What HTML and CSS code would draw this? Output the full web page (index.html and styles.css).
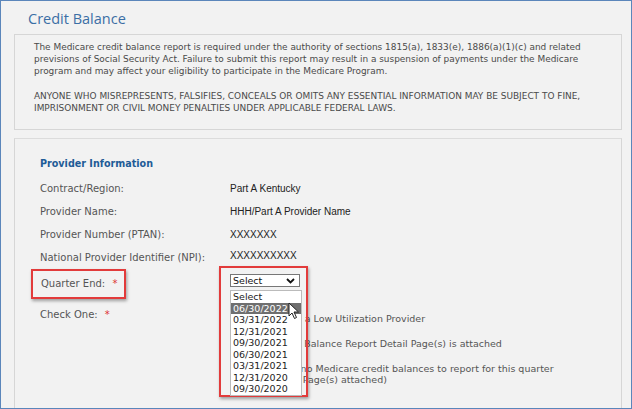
FILE: index.html
```html
<!DOCTYPE html>
<html lang="en">
<head>
    <meta charset="UTF-8">
    <title>Credit Balance</title>
    <link rel="stylesheet" href="styles.css">
</head>
<body>
    <div class="frame">
        <h1 class="title">Credit Balance</h1>
        <div class="notice">
            <p>The Medicare credit balance report is required under the authority of sections 1815(a), 1833(e), 1886(a)(1)(c) and related previsions of Social Security Act. Failure to submit this report may result in a suspension of payments under the Medicare program and may affect your eligibility to participate in the Medicare Program.</p>
            <p>ANYONE WHO MISREPRESENTS, FALSIFIES, CONCEALS OR OMITS ANY ESSENTIAL INFORMATION MAY BE SUBJECT TO FINE, IMPRISONMENT OR CIVIL MONEY PENALTIES UNDER APPLICABLE FEDERAL LAWS.</p>
        </div>
        <div class="panel">
            <h2 class="section">Provider Information</h2>
            <div class="form">
                <div class="label">Contract/Region:</div>
                <div class="value">Part A Kentucky</div>

                <div class="label">Provider Name:</div>
                <div class="value">HHH/Part A Provider Name</div>

                <div class="label">Provider Number (PTAN):</div>
                <div class="value">XXXXXXX</div>

                <div class="label">National Provider Identifier (NPI):</div>
                <div class="value npi">XXXXXXXXXX</div>

                <div class="label quarter"><span class="hl">Quarter End: <span class="req">*</span></span></div>
                <div class="value quarter-value">
                    <div class="callout">
                        <div class="select">Select
                            <svg class="chev" width="9" height="6" viewBox="0 0 9 6"><path d="M1 1 L4.5 4.5 L8 1" fill="none" stroke="#111" stroke-width="1.8"/></svg>
                        </div>
                        <ul class="options">
                            <li>Select</li>
                            <li class="active">06/30/2022</li>
                            <li>03/31/2022</li>
                            <li>12/31/2021</li>
                            <li>09/30/2021</li>
                            <li>06/30/2021</li>
                            <li>03/31/2021</li>
                            <li>12/31/2020</li>
                            <li>09/30/2020</li>
                        </ul>
                        <svg class="cursor" width="12" height="18" viewBox="0 0 12 18"><path d="M1 1 L1 14 L4 11 L6.5 16.5 L8.5 15.5 L6 10 L10.5 10 Z" fill="#fff" stroke="#222" stroke-width="1"/></svg>
                    </div>
                </div>

                <div class="label check">Check One: <span class="req">*</span></div>
                <div class="value check-list">
                    <label class="radio"><span class="dot"></span>Provider is a Low Utilization Provider</label>
                    <label class="radio"><span class="dot"></span>The Credit Balance Report Detail Page(s) is attached</label>
                    <label class="radio"><span class="dot"></span>There are no Medicare credit balances to report for this quarter<br>(No Detail Page(s) attached)</label>
                </div>
            </div>
        </div>
    </div>
</body>
</html>
```

FILE: styles.css
```css
body { margin: 0; background: #f2f2f2; }
.frame {
    width: 632px;
    height: 409px;
    box-sizing: border-box;
    border: 1px solid #5b86bb;
    background: #f2f2f2;
    overflow: hidden;
    font-family: "DejaVu Sans", Verdana, sans-serif;
}
.title {
    margin: 0;
    padding: 8px 0 0 27px;
    height: 19px;
    font-family: "Open Sans", sans-serif;
    font-size: 14.5px;
    font-weight: normal;
    line-height: 19px;
    color: #3b6ea5;
}
.notice {
    margin: 6px 9px 0 13px;
    height: 96px;
    box-sizing: border-box;
    border: 1px solid #d6d6d6;
    padding: 6px 20px 0 19px;
    font-size: 8.95px;
    line-height: 12px;
    color: #4a4a4a;
}
.notice p { margin: 0 0 13px; }
.panel {
    margin: 8px 9px 0 13px;
    height: 300px;
    border: 1px solid #d6d6d6;
    border-top-color: #dcdcdc;
    padding: 18px 0 0 25px;
}
.section {
    margin: 0 0 6px;
    font-size: 9.6px;
    line-height: 14px;
    color: #1e5c97;
}
.form {
    display: grid;
    grid-template-columns: 190px 1fr;
    grid-template-rows: repeat(4, 23px) 28px auto;
}
.label {
    font-size: 10px;
    line-height: 23px;
    color: #555;
}
.value {
    font-family: "Liberation Sans", Arial, sans-serif;
    font-size: 10px;
    line-height: 23px;
    color: #222;
}
.npi { line-height: 19px; }
.req { color: #d33; margin-left: 4px; }
.quarter { height: 28px; line-height: 28px; }
.hl {
    display: inline-block;
    margin-left: -9px;
    padding: 0 7px 0 8px;
    height: 26px;
    line-height: 26px;
    border: 2px solid #e23b3b;
    box-shadow: 1px 2px 3px rgba(0, 0, 0, 0.35);
}
.quarter-value { position: relative; height: 28px; }
.callout {
    position: absolute;
    left: -11px;
    top: -3px;
    width: 85px;
    height: 127px;
    border: 2px solid #e23b3b;
    box-shadow: 1px 2px 3px rgba(0, 0, 0, 0.35);
    z-index: 2;
}
.select {
    margin: 6px 0 0 9px;
    width: 70px;
    height: 13px;
    box-sizing: border-box;
    border: 1px solid #777;
    background: #fff;
    padding-left: 2px;
    font-family: "DejaVu Sans", Verdana, sans-serif;
    font-size: 9.5px;
    line-height: 11px;
    color: #111;
    position: relative;
}
.chev { position: absolute; right: 4px; top: 3px; }
.options {
    list-style: none;
    margin: 3px 0 0 9px;
    padding: 0;
    width: 70px;
    background: #fff;
    border: 1px solid #bbb;
    font-family: "DejaVu Sans", Verdana, sans-serif;
    font-size: 9.5px;
    line-height: 11.5px;
    color: #222;
}
.options li { padding-left: 2px; }
.options .active { background: #6f6f6f; color: #fff; }
.cursor { position: absolute; left: 67px; top: 34px; }
.check { line-height: 12px; padding-top: 12px; }
.check-list {
    padding-top: 16px;
    display: flex;
    flex-direction: column;
    gap: 13px;
    font-family: "DejaVu Sans", Verdana, sans-serif;
    font-size: 9.5px;
    color: #555;
}
.radio {
    display: flex;
    align-items: flex-start;
    line-height: 12px;
    padding-left: 7px;
}
.radio:nth-child(3) { line-height: 11px; }
.dot {
    width: 9px;
    height: 9px;
    border: 1px solid #666;
    border-radius: 50%;
    background: #fff;
    margin-right: 4px;
    flex: none;
}
```
